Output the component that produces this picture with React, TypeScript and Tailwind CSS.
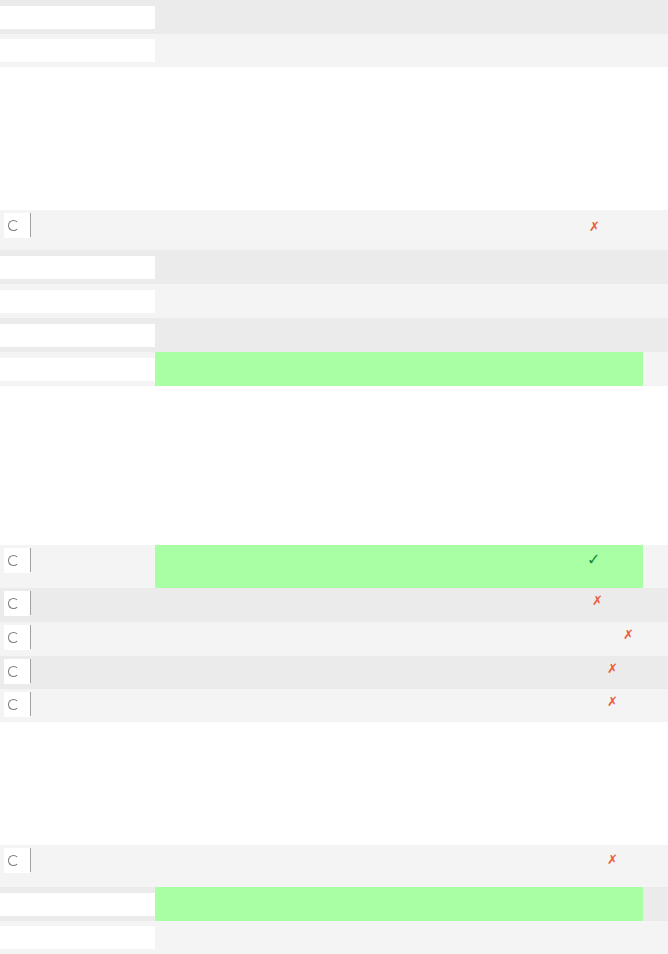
import React from 'react'

// ─── Types ────────────────────────────────────────────────────────────────────

type Kind = 'input' | 'radio'

interface Row {
  kind: Kind
  dark: boolean
  h: string
  green?: boolean
  mark?: 'x' | 'check'
  markCls?: string
}

// ─── Data ─────────────────────────────────────────────────────────────────────

const groups: Row[][] = [
  [
    { kind: 'input', dark: true, h: 'h-[34px]' },
    { kind: 'input', dark: false, h: 'h-[33px]' },
  ],
  [
    { kind: 'radio', dark: false, h: 'h-[40px]', mark: 'x', markCls: 'ml-[434px] mt-[4px]' },
    { kind: 'input', dark: true, h: 'h-[34px]' },
    { kind: 'input', dark: false, h: 'h-[34px]' },
    { kind: 'input', dark: true, h: 'h-[34px]' },
    { kind: 'input', dark: false, h: 'h-[34px]', green: true },
  ],
  [
    { kind: 'radio', dark: false, h: 'h-[43px]', green: true, mark: 'check', markCls: 'ml-[432px] mt-[1px]' },
    { kind: 'radio', dark: true, h: 'h-[34px]', mark: 'x', markCls: 'ml-[437px]' },
    { kind: 'radio', dark: false, h: 'h-[34px]', mark: 'x', markCls: 'ml-[468px]' },
    { kind: 'radio', dark: true, h: 'h-[33px]', mark: 'x', markCls: 'ml-[452px]' },
    { kind: 'radio', dark: false, h: 'h-[33px]', mark: 'x', markCls: 'ml-[452px]' },
  ],
  [
    { kind: 'radio', dark: false, h: 'h-[42px]', mark: 'x', markCls: 'ml-[452px] mt-[2px]' },
    { kind: 'input', dark: true, h: 'h-[34px]', green: true },
    { kind: 'input', dark: false, h: 'h-[33px]' },
  ],
]

const gaps = ['h-[143px]', 'h-[159px]', 'h-[123px]']

// ─── Pieces ───────────────────────────────────────────────────────────────────

function Radio() {
  return (
    <div className="flex h-full w-[155px] items-start pl-1 pt-[3px]">
      <div className="flex h-[25px] w-[26px] items-center pl-[4px] bg-white">
        <span className="block h-[11px] w-[11px] rounded-full border-[1.5px] border-[#7a7a7a] border-r-transparent" />
      </div>
      <div className="h-[24px] w-px bg-[#a0a0a0]" />
    </div>
  )
}

function Field() {
  return (
    <div className="flex h-full w-[155px] items-center">
      <div className="h-[23px] w-[155px] bg-white" />
    </div>
  )
}

function TableRow({ row }: { row: Row }) {
  return (
    <div className={`flex ${row.h} ${row.dark ? 'bg-[#ebebeb]' : 'bg-[#f4f4f4]'}`}>
      {row.kind === 'radio' ? <Radio /> : <Field />}
      <div className={`flex w-[488px] items-start pt-[6px] ${row.green ? 'bg-[#a8ffa4]' : ''}`}>
        {row.mark && (
          <span
            className={`${row.markCls} leading-none ${
              row.mark === 'x' ? 'text-[13px] text-[#ee5a3c]' : 'text-[16px] text-[#13893a]'
            }`}
            style={{ fontFamily: '"DejaVu Sans", sans-serif' }}
          >
            {row.mark === 'x' ? '✗' : '✓'}
          </span>
        )}
      </div>
    </div>
  )
}

// ─── App ──────────────────────────────────────────────────────────────────────

export default function App() {
  return (
    <div className="h-[954px] w-[668px] overflow-hidden bg-white">
      {groups.map((g, i) => (
        <React.Fragment key={i}>
          {g.map((r, j) => (
            <TableRow key={j} row={r} />
          ))}
          {i < gaps.length && <div className={gaps[i]} />}
        </React.Fragment>
      ))}
    </div>
  )
}
